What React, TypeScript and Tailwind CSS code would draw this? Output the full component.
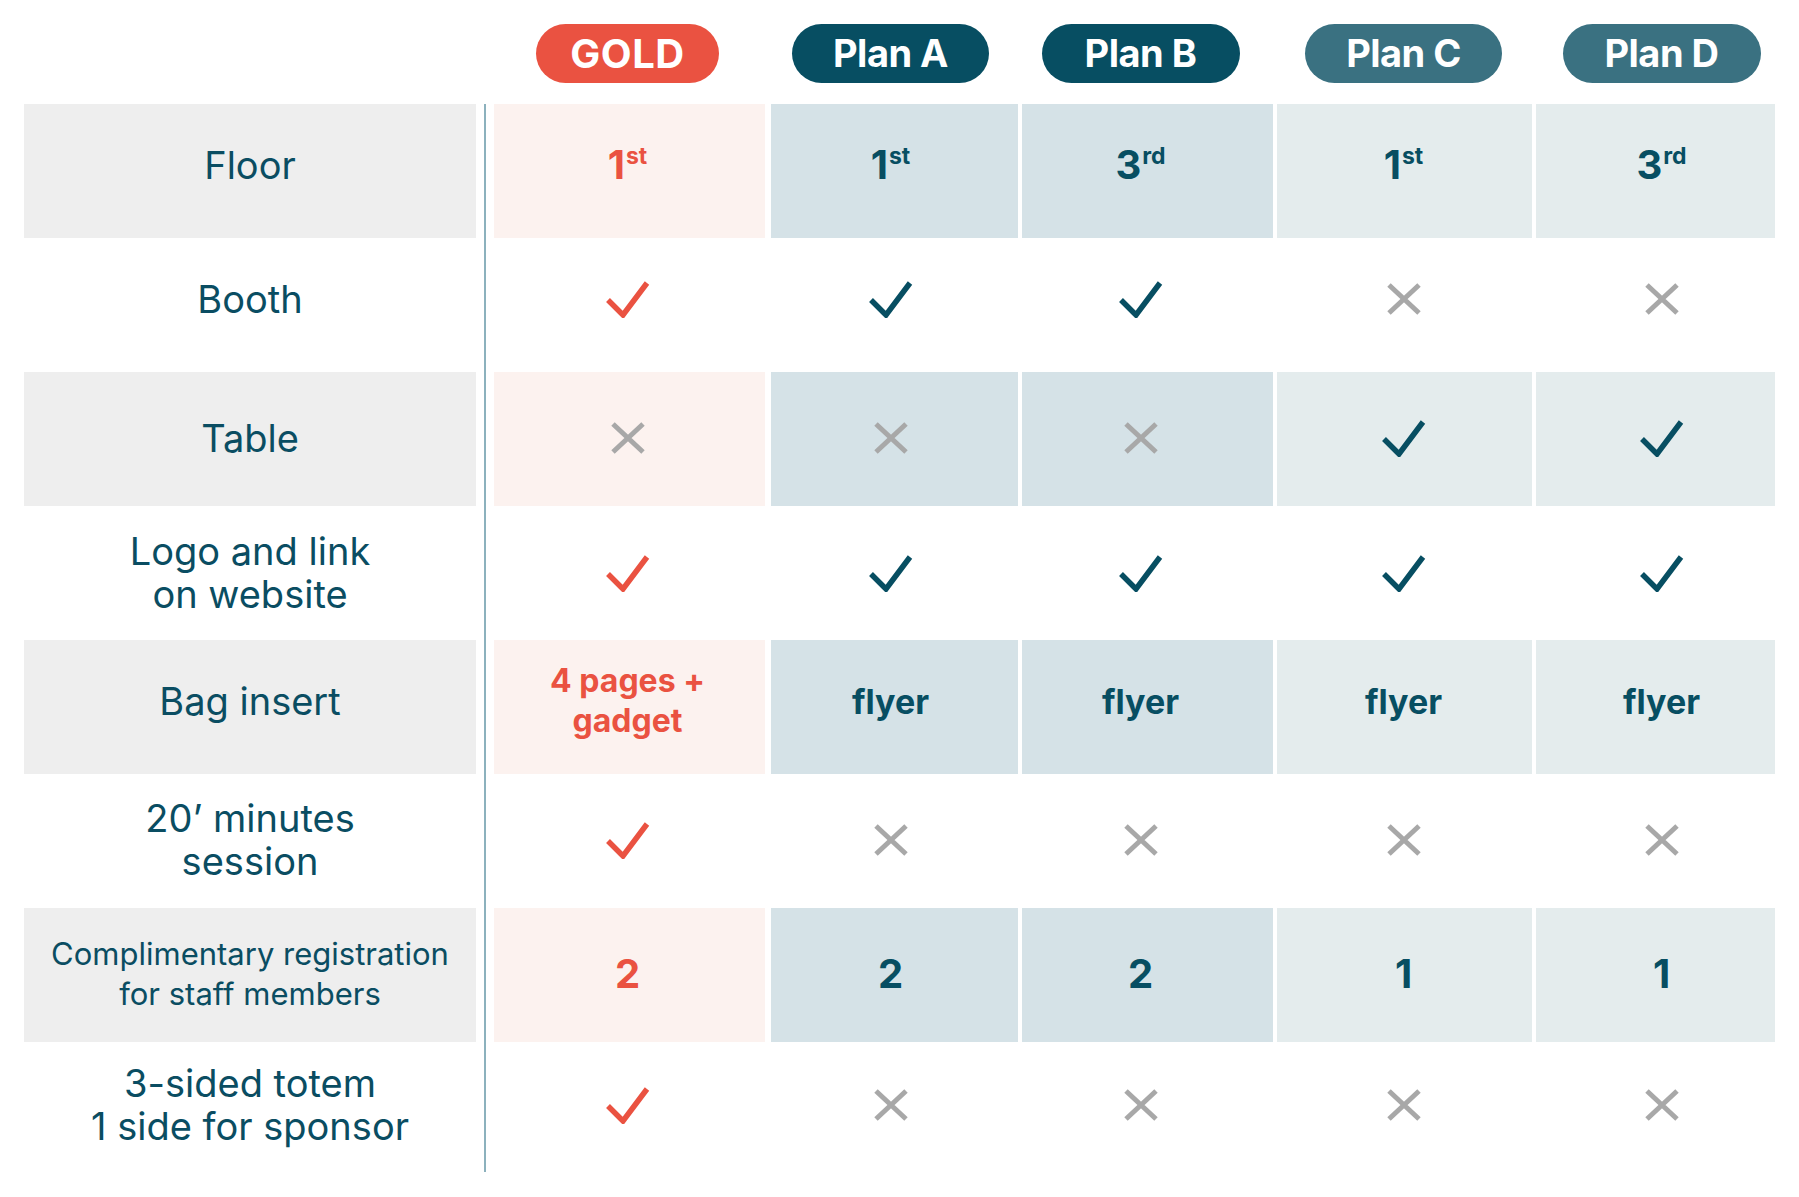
import React from 'react';

type Val = 'yes' | 'no' | string;

const columns = [
  { name: 'GOLD', col: 'w-[271px] ml-0', shift: 'pr-[4px]', pill: 'w-[183px] bg-[#ea5241] text-[40px] tracking-[0.5px]', cell: 'bg-[#fcf2ef]', text: 'text-[#ea5241]', check: '#ea5241' },
  { name: 'Plan A', col: 'w-[247px] ml-[6px]', shift: 'pr-[8px]', pill: 'w-[197px] bg-[#074e62] text-[38px] tracking-[-0.5px]', cell: 'bg-[#d5e2e7]', text: 'text-[#074e62]', check: '#074e62' },
  { name: 'Plan B', col: 'w-[251px] ml-[4px]', shift: 'pr-[14px]', pill: 'w-[198px] bg-[#074e62] text-[38px] tracking-[-0.5px]', cell: 'bg-[#d5e2e7]', text: 'text-[#074e62]', check: '#074e62' },
  { name: 'Plan C', col: 'w-[255px] ml-[4px]', shift: 'pr-[2px]', pill: 'w-[197px] bg-[#3a7181] text-[38px] tracking-[-0.5px]', cell: 'bg-[#e4eced]', text: 'text-[#074e62]', check: '#074e62' },
  { name: 'Plan D', col: 'w-[239px] ml-[4px]', shift: 'pl-[12px]', pill: 'w-[198px] bg-[#3a7181] text-[38px] tracking-[-0.5px]', cell: 'bg-[#e4eced]', text: 'text-[#074e62]', check: '#074e62' },
];

// lift: small upward nudge some rows have in the original layout
const rows: { label: string; small?: boolean; lift: string; values: Val[] }[] = [
  { label: 'Floor', lift: 'pb-[12px]', values: ['1|st', '1|st', '3|rd', '1|st', '3|rd'] },
  { label: 'Booth', lift: 'pb-[12px]', values: ['yes', 'yes', 'yes', 'no', 'no'] },
  { label: 'Table', lift: 'pb-[2px]', values: ['no', 'no', 'no', 'yes', 'yes'] },
  { label: 'Logo and link\non website', lift: 'pb-0', values: ['yes', 'yes', 'yes', 'yes', 'yes'] },
  { label: 'Bag insert', lift: 'pb-[12px]', values: ['4 pages +\ngadget', 'flyer', 'flyer', 'flyer', 'flyer'] },
  { label: '20’ minutes\nsession', lift: 'pb-[2px]', values: ['yes', 'no', 'no', 'no', 'no'] },
  { label: 'Complimentary registration\nfor staff members', small: true, lift: 'pb-[2px]', values: ['2', '2', '2', '1', '1'] },
  { label: '3-sided totem\n1 side for sponsor', lift: 'pb-[8px]', values: ['yes', 'no', 'no', 'no', 'no'] },
];

const Check = ({ color }: { color: string }) => (
  <svg width="44" height="38" viewBox="0 0 44 38" fill="none">
    <polyline points="2,20 17,35 41,3" stroke={color} strokeWidth="5.5" />
  </svg>
);

const Cross = () => (
  <svg width="34" height="32" viewBox="0 0 34 32" fill="none">
    <path d="M2 2 L32 30 M32 2 L2 30" stroke="#a8a8a8" strokeWidth="5" />
  </svg>
);

const Cell = ({ value, col }: { value: Val; col: (typeof columns)[number] }) => {
  if (value === 'yes') return <Check color={col.check} />;
  if (value === 'no') return <Cross />;
  if (value.includes('|')) {
    const [n, s] = value.split('|');
    return (
      <span className={`text-[40px] font-bold leading-none ${col.text}`}>
        {n}
        <sup className="text-[23px] font-bold -top-[15px] ml-[1px]">{s}</sup>
      </span>
    );
  }
  if (value.includes('\n')) {
    return (
      <span className={`text-[32px] font-bold leading-[40px] text-center whitespace-pre-line ${col.text}`}>
        {value}
      </span>
    );
  }
  const big = value.length === 1;
  return (
    <span className={`${big ? 'text-[40px]' : 'text-[34px]'} font-bold ${col.text}`}>{value}</span>
  );
};

const App = () => {
  return (
    <div
      className="w-[1799px] h-[1197px] bg-white flex pl-[24px] text-[#0a4d62]"
      style={{ fontFamily: 'Inter, "Noto Sans", sans-serif' }}
    >
      <div className="w-[452px] flex flex-col">
        <div className="h-[104px]" />
        {rows.map((r, i) => (
          <div
            key={r.label}
            className={`h-[134px] flex items-center justify-center text-center whitespace-pre-line ${r.lift} ${
              i % 2 === 0 ? 'bg-[#eeeeee]' : ''
            } ${r.small ? 'text-[31px] leading-[40px]' : 'text-[38px] leading-[43px]'}`}
          >
            {r.label}
          </div>
        ))}
      </div>

      <div className="w-[2px] mx-[8px] mt-[104px] h-[1068px] bg-[#8cb1bd]" />

      {columns.map((c, ci) => (
        <div key={c.name} className={`flex flex-col ${c.col}`}>
          <div className={`h-[104px] pt-[24px] flex justify-center ${c.shift}`}>
            <div
              className={`h-[59px] rounded-full flex items-center justify-center text-white font-bold ${c.pill}`}
            >
              {c.name}
            </div>
          </div>
          {rows.map((r, ri) => (
            <div
              key={r.label}
              className={`h-[134px] flex items-center justify-center ${c.shift} ${r.lift} ${
                ri % 2 === 0 ? c.cell : ''
              }`}
            >
              <Cell value={r.values[ci]} col={c} />
            </div>
          ))}
        </div>
      ))}
    </div>
  );
};

export default App;
